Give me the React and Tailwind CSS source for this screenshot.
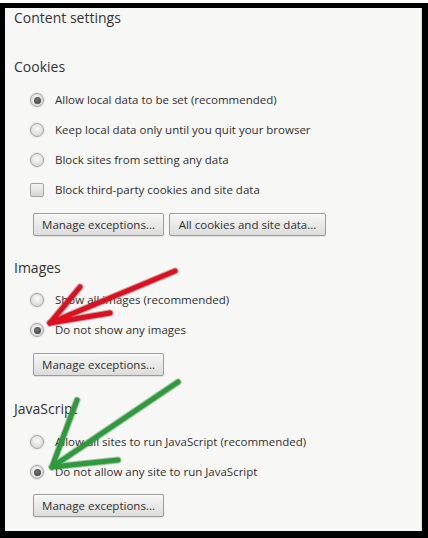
import React from "react";

const font = { fontFamily: '"Open Sans", "Noto Sans", sans-serif' };

function Radio({ checked, label }) {
  return (
    <div className="flex h-[30px] items-center pl-[25px]">
      <span className="flex h-[14px] w-[14px] items-center justify-center rounded-full border border-[#a4a4a4] bg-[radial-gradient(circle_at_50%_40%,#fafafa,#cfcfcf)] shadow-[0_0_0_1px_#e6e6e6]">
        {checked && <span className="h-[7px] w-[7px] rounded-full bg-[radial-gradient(circle_at_45%_40%,#767676,#363636)]" />}
      </span>
      <span className="ml-[11px] text-[11.5px] leading-[16px] text-[#303030]">{label}</span>
    </div>
  );
}

function Checkbox({ label }) {
  return (
    <div className="flex h-[30px] items-center pl-[25px]">
      <span className="h-[14px] w-[14px] rounded-[2px] border border-[#a4a4a4] bg-[linear-gradient(#f4f4f4,#d6d6d6)]" />
      <span className="ml-[11px] text-[11.5px] leading-[16px] text-[#303030]">{label}</span>
    </div>
  );
}

function Button({ children, w }) {
  return (
    <button
      className={`flex h-[23px] items-center justify-center rounded-[2px] border border-[#9c9c9c] bg-[linear-gradient(#f6f6f6,#dcdcdc)] text-[11.5px] leading-[16px] text-[#303030] shadow-[inset_0_1px_0_#ffffff,0_1px_1px_#e2e2e2] ${w}`}
    >
      {children}
    </button>
  );
}

function Heading({ children, className = "" }) {
  return (
    <div className={`h-[20px] pl-[9px] text-[14px] leading-[20px] text-[#333333] ${className}`}>
      {children}
    </div>
  );
}

export default function App() {
  return (
    <div className="relative flex h-[538px] w-[428px] flex-col bg-black" style={font}>
      <div className="h-[3px] bg-white" />
      <div className="flex-1 pb-[7px] pl-[5px] pr-[6px] pt-[5px]">
        <div className="h-full border-r border-[#dcdcdc] bg-[#f7f7f6] pr-[4px]">
          <Heading>Content settings</Heading>
          <Heading className="mt-[29px]">Cookies</Heading>
          <div className="mt-[8px]">
            <Radio checked label="Allow local data to be set (recommended)" />
            <Radio label="Keep local data only until you quit your browser" />
            <Radio label="Block sites from setting any data" />
            <Checkbox label="Block third-party cookies and site data" />
          </div>
          <div className="mt-[8px] flex gap-[5px] pl-[28px]">
            <Button w="w-[131px]">Manage exceptions...</Button>
            <Button w="w-[157px]">All cookies and site data...</Button>
          </div>
          <Heading className="mt-[22px]">Images</Heading>
          <div className="mt-[7px]">
            <Radio label="Show all images (recommended)" />
            <Radio checked label="Do not show any images" />
          </div>
          <div className="mt-[8px] flex pl-[28px]">
            <Button w="w-[131px]">Manage exceptions...</Button>
          </div>
          <Heading className="mt-[23px]">JavaScript</Heading>
          <div className="mt-[8px]">
            <Radio label="Allow all sites to run JavaScript (recommended)" />
            <Radio checked label="Do not allow any site to run JavaScript" />
          </div>
          <div className="mt-[7px] flex pl-[28px]">
            <Button w="w-[131px]">Manage exceptions...</Button>
          </div>
        </div>
      </div>
      <svg className="pointer-events-none absolute left-0 top-0" width="428" height="538" viewBox="0 0 428 538">
        <g stroke="#8a0a12" strokeWidth="7" strokeLinecap="round" fill="none" opacity="0.35">
          <line x1="175" y1="271" x2="50" y2="323" />
          <line x1="80" y1="287" x2="50" y2="323" />
          <line x1="110" y1="313" x2="50" y2="323" />
        </g>
        <g stroke="#dc1020" strokeWidth="5" strokeLinecap="round" fill="none">
          <line x1="175" y1="271" x2="50" y2="323" />
          <line x1="80" y1="287" x2="50" y2="323" />
          <line x1="110" y1="313" x2="50" y2="323" />
        </g>
        <g stroke="#1d6e2a" strokeWidth="7" strokeLinecap="round" fill="none" opacity="0.35">
          <line x1="178" y1="382" x2="52" y2="467" />
          <line x1="77" y1="400" x2="52" y2="467" />
          <line x1="118" y1="460" x2="52" y2="467" />
        </g>
        <g stroke="#2e9a3c" strokeWidth="5" strokeLinecap="round" fill="none">
          <line x1="178" y1="382" x2="52" y2="467" />
          <line x1="77" y1="400" x2="52" y2="467" />
          <line x1="118" y1="460" x2="52" y2="467" />
        </g>
      </svg>
    </div>
  );
}
